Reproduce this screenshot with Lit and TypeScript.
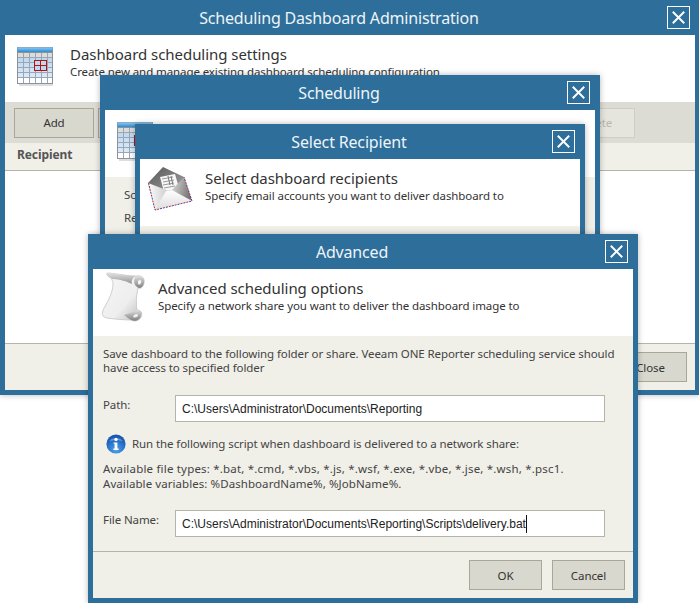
import { LitElement, html, css, svg } from "lit";
import { customElement, property } from "lit/decorators.js";

const calendarIcon = () => html`<svg width="38" height="40" viewBox="0 0 38 40" aria-hidden="true">
  <defs>
    <linearGradient id="calTop" x1="0" y1="0" x2="0" y2="1"><stop offset="0" stop-color="#8cc8f2"/><stop offset="1" stop-color="#1f86cf"/></linearGradient>
    <linearGradient id="calBody" x1="0" y1="0" x2="0" y2="1"><stop offset="0" stop-color="#b0cdea"/><stop offset="1" stop-color="#e6f1fb"/></linearGradient>
  </defs>
  <rect x="2" y="36" width="34" height="3" fill="#dedede"/>
  <rect x="0.5" y="0.5" width="35" height="36" fill="url(#calBody)" stroke="#8b929b"/>
  <rect x="1" y="5" width="35" height="5" fill="#dcdcd8"/>
  <rect x="1" y="31" width="35" height="5" fill="#ffffff"/>
  <rect x="0.5" y="0.5" width="35" height="5" fill="url(#calTop)"/>
  <g stroke="#98a6b5" stroke-width="1" fill="none">
    <path d="M6.5 5v31M12.5 5v31M18.5 5v31M24.5 5v31M30.5 5v31"/>
    <path d="M1 10.5h35M1 15.5h35M1 20.5h35M1 25.5h35M1 30.5h35"/>
    <rect x="0.5" y="5.5" width="35" height="31" stroke="#8b929b"/>
  </g>
  <rect x="17.5" y="13.5" width="12" height="10" fill="#bcd9f3" stroke="#b80f0f"/>
  <path d="M23.5 13.5v10M17.5 18.5h12" stroke="#b80f0f"/>
</svg>`;

const envelopeIcon = () => html`<svg width="46" height="46" viewBox="0 0 46 46" aria-hidden="true">
  <defs>
    <linearGradient id="envBack" x1="0" y1="0" x2="1" y2="1"><stop offset="0" stop-color="#565656"/><stop offset="1" stop-color="#a8a8a8"/></linearGradient>
    <linearGradient id="envRight" x1="0" y1="0" x2="1" y2="0.3"><stop offset="0" stop-color="#e2e2e2"/><stop offset="1" stop-color="#777"/></linearGradient>
    <linearGradient id="envLeft" x1="0" y1="0" x2="1" y2="0"><stop offset="0" stop-color="#fdfdfd"/><stop offset="1" stop-color="#c9c9c9"/></linearGradient>
    <linearGradient id="envFront" x1="0" y1="0" x2="0" y2="1"><stop offset="0" stop-color="#ffffff"/><stop offset="1" stop-color="#dcdcdc"/></linearGradient>
  </defs>
  <polygon points="15,0 36,10 38,18 24,27 2,24 0,16" fill="url(#envBack)"/>
  <polygon points="12,10 27,7 31,21 16,25" fill="#f7f7f7"/>
  <path d="M14 12l11-2M15 15l11-2M15 18l11-2M16 21l11-2" stroke="#9a9a9a" stroke-width="1"/>
  <path d="M20 9l2 9M23 9l2 9" stroke="#777" stroke-width="1"/>
  <polygon points="36,10 44,34 23,24" fill="url(#envRight)"/>
  <polygon points="0,16 7,43 21,24" fill="url(#envLeft)"/>
  <polygon points="7,43 44,34 24,23 18,24" fill="url(#envFront)"/>
  <path d="M0.5 16L7 43L44 34L36 10" fill="none" stroke="#d5262a" stroke-width="1" stroke-dasharray="2 4"/>
  <path d="M0.5 16L7 43L44 34L36 10" fill="none" stroke="#2348b0" stroke-width="1" stroke-dasharray="2 4" stroke-dashoffset="3"/>
</svg>`;

const scrollIcon = () => html`<svg width="46" height="52" viewBox="0 0 46 52" aria-hidden="true">
  <defs>
    <linearGradient id="scrPage" x1="0" y1="0" x2="1" y2="1"><stop offset="0" stop-color="#f6f6f6"/><stop offset="0.6" stop-color="#eeeeee"/><stop offset="1" stop-color="#b5b5b5"/></linearGradient>
    <linearGradient id="scrRoll" x1="0" y1="0" x2="0" y2="1"><stop offset="0" stop-color="#e0e0e0"/><stop offset="1" stop-color="#808080"/></linearGradient>
  </defs>
  <path d="M8 4C6 2 6 1 9 1C18 2 28 4 36 4C42 3 45 6 44 11C43 16 40 17 38 16C36 24 36 32 37 38C41 38 43 41 41 45C39 49 35 50 31 48C24 48 14 47 7 46C2 45 1 42 4 36C9 28 13 19 13 12C13 8 11 6 8 4Z" fill="url(#scrPage)" stroke="#c4c4c4" stroke-width="0.8"/>
  <path d="M8 4C6 2 6 1 9 1C18 2 28 4 36 4C33 5 31 8 32 12C24 8 16 7 12 7C11 6 10 5 8 4Z" fill="url(#scrRoll)" opacity=".85"/>
  <path d="M36 4C42 3 45 6 44 11C43 16 39 17 37 15C34 13 33 8 36 4Z" fill="url(#scrRoll)"/>
  <path d="M38 9C40 7 42 8 41 11C40 13 38 13 38 11Z" fill="#f4f4f4"/>
  <path d="M31 48C35 50 40 48 41 44C42 40 39 37 36 38C33 40 28 42 24 43C27 45 29 47 31 48Z" fill="url(#scrRoll)"/>
  <path d="M33 45C34 42 37 41 38 43C38 45 35 46 33 45Z" fill="#f1f1f1"/>
</svg>`;

const infoIcon = () => html`<svg width="20" height="20" viewBox="0 0 20 20" aria-hidden="true">
  <defs>
    <radialGradient id="infoFill" cx="0.5" cy="0.8" r="0.85"><stop offset="0" stop-color="#4fa3ea"/><stop offset="0.7" stop-color="#1b62bd"/><stop offset="1" stop-color="#14509f"/></radialGradient>
  </defs>
  <circle cx="10" cy="10" r="9.6" fill="url(#infoFill)"/>
  <path d="M3 7.5C5 3 15 3 17 7.5C13 5.5 7 5.5 3 7.5Z" fill="#ffffff" opacity=".35"/>
  <circle cx="10" cy="5.4" r="1.7" fill="#fff"/>
  <path d="M7.6 8.4h3.8v6.2h1.2v1.4H7.4v-1.4h1.2v-4.8h-1Z" fill="#fff"/>
</svg>`;

const closeGlyph = svg`<path d="M5 5l12 12M17 5L5 17" stroke="#fff" stroke-width="2" fill="none"/>`;

@customElement("app-dialog")
class AppDialog extends LitElement {
  @property() heading = "";

  static styles = css`
    :host {
      display: flex;
      flex-direction: column;
      box-sizing: border-box;
      background: #2d6e9a;
      padding: 0 5px 5px;
      box-shadow: 0 0 6px rgba(0, 0, 0, 0.28);
    }
    .bar {
      flex: none;
      height: 35px;
      display: flex;
      align-items: center;
      padding: 0 5px 0 6px;
      box-sizing: border-box;
      color: #eef4f8;
      font-size: 16px;
      letter-spacing: -0.17px;
    }
    .name {
      flex: 1;
      text-align: center;
      padding-top: 1px;
    }
    .close {
      width: 23px;
      height: 23px;
      box-sizing: border-box;
      border: 1px solid #fff;
      display: flex;
    }
    .close svg {
      width: 21px;
      height: 21px;
    }
    .content {
      flex: 1;
      min-height: 0;
      display: flex;
      flex-direction: column;
      background: #fff;
    }
  `;

  render() {
    return html`<div class="bar">
        <span class="name">${this.heading}</span>
        <span class="close"><svg viewBox="0 0 22 22">${closeGlyph}</svg></span>
      </div>
      <div class="content"><slot></slot></div>`;
  }
}

@customElement("app-root")
class AppRoot extends LitElement {
  static styles = css`
    :host {
      display: block;
      position: relative;
      width: 699px;
      height: 603px;
      overflow: hidden;
      background: #fff;
      font-family: "Noto Sans", "DejaVu Sans", sans-serif;
      font-size: 11.5px;
      letter-spacing: -0.09px;
      color: #444;
    }
    app-dialog {
      position: absolute;
    }
    .win-main { left: 0; top: 0; width: 700px; height: 395px; }
    .win-sched { left: 100px; top: 75px; width: 500px; height: 400px; }
    .win-recip { left: 135px; top: 124px; width: 450px; height: 300px; }
    .win-adv { left: 88px; top: 234px; width: 550px; height: 369px; }

    .head {
      flex: none;
      height: 67px;
      box-sizing: border-box;
      display: flex;
      background: #fff;
      color: #333;
    }
    .icon {
      flex: none;
      width: 65px;
      box-sizing: border-box;
    }
    .icon svg { display: block; }
    .icon.cal { padding: 12px 0 0 12px; }
    .icon.env { padding: 8px 0 0 8px; }
    .icon.scr { padding: 3px 0 0 7px; }
    .texts { padding-top: 9px; }
    .title {
      font-size: 15px;
      line-height: 21px;
      letter-spacing: -0.05px;
    }
    .sub {
      line-height: 14px;
    }

    .toolbar {
      flex: none;
      height: 41px;
      box-sizing: border-box;
      background: #dddcd4;
      display: flex;
      align-items: center;
      gap: 4px;
      padding: 0 60px 0 9px;
    }
    .btn {
      flex: none;
      width: 80px;
      height: 30px;
      box-sizing: border-box;
      border: 1px solid #a9a898;
      background: #d9d8ce;
      color: #333;
      display: flex;
      align-items: center;
      justify-content: center;
    }
    .btn.off {
      margin-left: auto;
      background: #e6e5dd;
      border-color: #cfcec3;
      color: #b9b8ac;
    }
    .btn.small { width: 73px; }
    .column {
      flex: none;
      height: 28px;
      box-sizing: border-box;
      background: #f0efe8;
      border-bottom: 1px solid #b5b4a8;
      padding: 4px 0 0 12px;
      font-size: 12px;
      font-weight: 700;
      line-height: 16px;
      color: #555;
    }
    .list { flex: 1; background: #fff; }
    .foot {
      flex: none;
      height: 47px;
      box-sizing: border-box;
      background: #f0efe8;
      border-top: 1px solid #b5b4a8;
      display: flex;
      justify-content: flex-end;
      gap: 10px;
      padding: 8px 8px 0 0;
    }
    .pane {
      flex: 1;
      min-height: 0;
      background: #f0efe8;
      display: flex;
      flex-direction: column;
    }
    .pane.sched {
      padding: 11px 0 0 19px;
      gap: 9px;
      line-height: 14px;
    }
    .pane.adv {
      padding: 11px 10px 0 10px;
      line-height: 14px;
    }
    .row {
      display: grid;
      grid-template-columns: 72px 430px;
    }
    .row.path { margin-top: 20px; }
    .row.file { margin-top: 19px; }
    .row label { padding-top: 3px; }
    .field {
      height: 27px;
      box-sizing: border-box;
      border: 1px solid #b5b4a8;
      background: #fff;
      padding: 0 6px;
      display: flex;
      align-items: center;
      font-family: "Liberation Sans", Arial, sans-serif;
      font-size: 12px;
      letter-spacing: 0;
      color: #222;
    }
    .caret {
      width: 1px;
      height: 18px;
      background: #111;
    }
    .note {
      margin-top: 12px;
      height: 20px;
      display: flex;
      align-items: center;
      gap: 6px;
      padding-left: 3px;
    }
    .note svg { display: block; }
    .types {
      margin-top: 7px;
      line-height: 15px;
      display: flex;
      flex-direction: column;
    }
    .types .wide { letter-spacing: 0.19px; }
    .types .mid { letter-spacing: 0.07px; }
  `;

  private head(icon: unknown, cls: string, title: string, sub: string) {
    return html`<div class="head">
      <div class="icon ${cls}">${icon}</div>
      <div class="texts">
        <div class="title">${title}</div>
        <div class="sub">${sub}</div>
      </div>
    </div>`;
  }

  render() {
    return html`
      <app-dialog class="win-main" heading="Scheduling Dashboard Administration">
        ${this.head(calendarIcon(), "cal", "Dashboard scheduling settings", "Create new and manage existing dashboard scheduling configuration")}
        <div class="toolbar">
          <span class="btn">Add</span>
          <span class="btn">Edit</span>
          <span class="btn off">Delete</span>
        </div>
        <div class="column">Recipient</div>
        <div class="list"></div>
        <div class="foot"><span class="btn small">Close</span></div>
      </app-dialog>

      <app-dialog class="win-sched" heading="Scheduling">
        ${this.head(calendarIcon(), "cal", "Dashboard scheduling configuration", "Specify dashboard scheduling settings")}
        <div class="pane sched">
          <span>Schedule:</span>
          <span>Recipients:</span>
        </div>
      </app-dialog>

      <app-dialog class="win-recip" heading="Select Recipient">
        ${this.head(envelopeIcon(), "env", "Select dashboard recipients", "Specify email accounts you want to deliver dashboard to")}
        <div class="pane"></div>
      </app-dialog>

      <app-dialog class="win-adv" heading="Advanced">
        ${this.head(scrollIcon(), "scr", "Advanced scheduling options", "Specify a network share you want to deliver the dashboard image to")}
        <div class="pane adv">
          <div>Save dashboard to the following folder or share. Veeam ONE Reporter scheduling service should<br />have access to specified folder</div>
          <div class="row path">
            <label>Path:</label>
            <div class="field">C:\\Users\\Administrator\\Documents\\Reporting</div>
          </div>
          <div class="note">
            ${infoIcon()}
            <span>Run the following script when dashboard is delivered to a network share:</span>
          </div>
          <div class="types">
            <span class="wide">Available file types: *.bat, *.cmd, *.vbs, *.js, *.wsf, *.exe, *.vbe, *.jse, *.wsh, *.psc1.</span>
            <span class="mid">Available variables: %DashboardName%, %JobName%.</span>
          </div>
          <div class="row file">
            <label>File Name:</label>
            <div class="field">C:\\Users\\Administrator\\Documents\\Reporting\\Scripts\\delivery.bat<span class="caret"></span></div>
          </div>
        </div>
        <div class="foot">
          <span class="btn small">OK</span>
          <span class="btn small">Cancel</span>
        </div>
      </app-dialog>
    `;
  }
}
